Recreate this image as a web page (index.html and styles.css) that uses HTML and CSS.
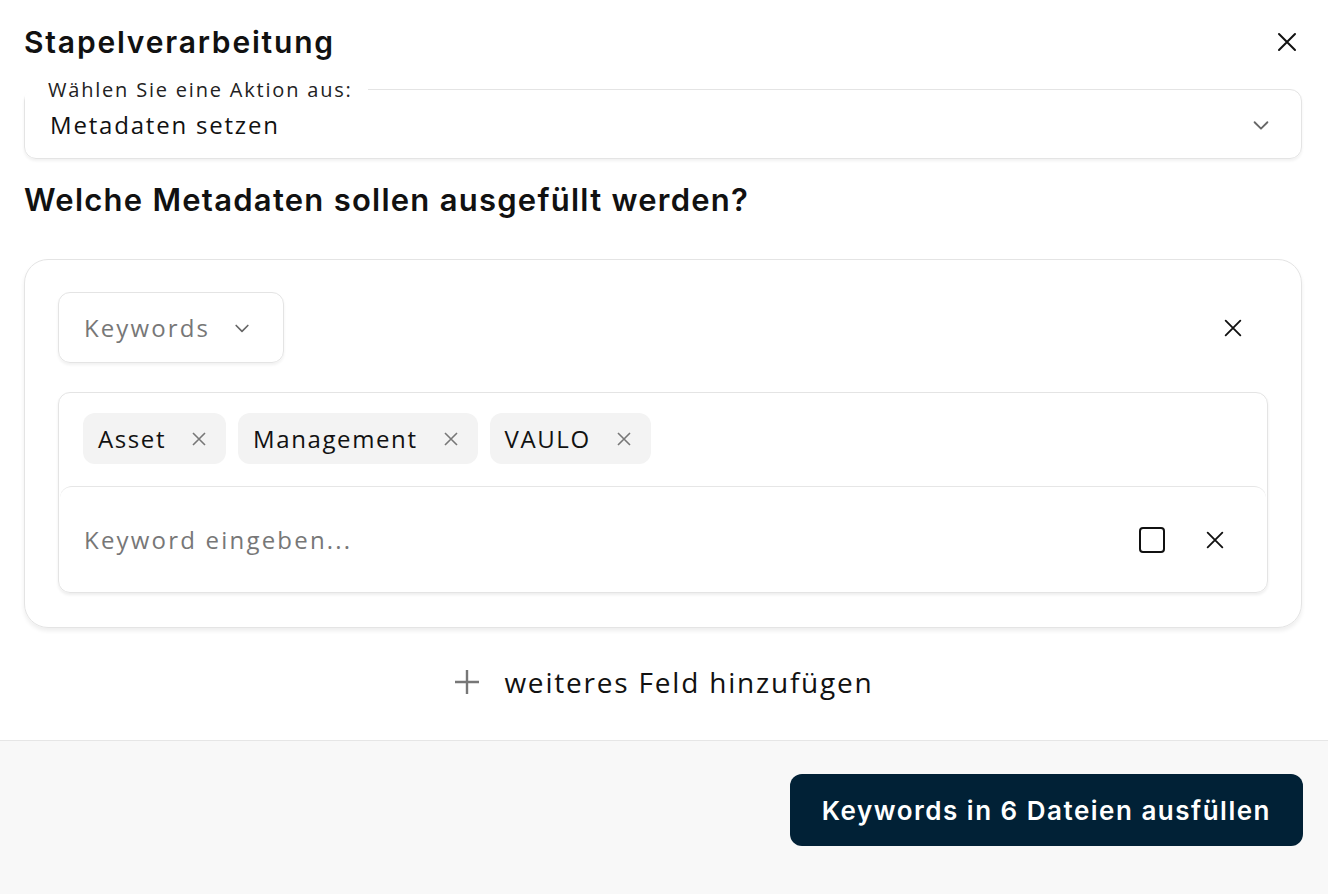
FILE: index.html
```html
<!DOCTYPE html>
<html>
<head>
    <link rel="stylesheet" href="styles.css">
</head>
<body>
    <div class="dialog">
        <div class="dialog-body">
            <div class="dialog-header">
                <h1 class="dialog-title">Stapelverarbeitung</h1>
                <button class="icon-btn close-btn" aria-label="Schließen">
                    <svg width="24" height="24" viewBox="0 0 24 24"><path d="M4 4L20 20M20 4L4 20" stroke="#111" stroke-width="2" stroke-linecap="round"/></svg>
                </button>
            </div>

            <fieldset class="action-select">
                <legend>Wählen Sie eine Aktion aus:</legend>
                <span class="action-value">Metadaten setzen</span>
                <svg class="chevron" width="22" height="22" viewBox="0 0 24 24"><path d="M5 9L12 16L19 9" fill="none" stroke="#666" stroke-width="2" stroke-linecap="round" stroke-linejoin="round"/></svg>
            </fieldset>

            <h2 class="section-title">Welche Metadaten sollen ausgefüllt werden?</h2>

            <div class="field-card">
                <div class="field-row">
                    <button class="field-select">
                        <span>Keywords</span>
                        <svg width="20" height="20" viewBox="0 0 24 24"><path d="M5 9L12 16L19 9" fill="none" stroke="#666" stroke-width="2" stroke-linecap="round" stroke-linejoin="round"/></svg>
                    </button>
                    <button class="icon-btn" aria-label="Feld entfernen">
                        <svg width="22" height="22" viewBox="0 0 24 24"><path d="M4 4L20 20M20 4L4 20" stroke="#111" stroke-width="2" stroke-linecap="round"/></svg>
                    </button>
                </div>

                <div class="keyword-box">
                    <div class="tags">
                        <span class="tag">Asset <svg width="16" height="16" viewBox="0 0 16 16"><path d="M2 2L14 14M14 2L2 14" stroke="#777" stroke-width="1.6"/></svg></span>
                        <span class="tag">Management <svg width="16" height="16" viewBox="0 0 16 16"><path d="M2 2L14 14M14 2L2 14" stroke="#777" stroke-width="1.6"/></svg></span>
                        <span class="tag">VAULO <svg width="16" height="16" viewBox="0 0 16 16"><path d="M2 2L14 14M14 2L2 14" stroke="#777" stroke-width="1.6"/></svg></span>
                    </div>
                    <div class="keyword-input">
                        <span class="placeholder">Keyword eingeben...</span>
                        <div class="input-actions">
                            <svg width="28" height="28" viewBox="0 0 28 28"><rect x="2" y="2" width="24" height="24" rx="3" fill="none" stroke="#111" stroke-width="2"/></svg>
                            <svg width="22" height="22" viewBox="0 0 24 24"><path d="M4 4L20 20M20 4L4 20" stroke="#111" stroke-width="2" stroke-linecap="round"/></svg>
                        </div>
                    </div>
                </div>
            </div>

            <button class="add-field">
                <svg width="30" height="30" viewBox="0 0 30 30"><path d="M15 3V27M3 15H27" stroke="#777" stroke-width="2.4"/></svg>
                <span>weiteres Feld hinzufügen</span>
            </button>
        </div>

        <div class="dialog-footer">
            <button class="primary-btn">Keywords in 6 Dateien ausfüllen</button>
        </div>
    </div>
</body>
</html>
```

FILE: styles.css
```css
* {
    box-sizing: border-box;
}

body {
    margin: 0;
    background: #fff;
    font-family: "Open Sans", sans-serif;
    letter-spacing: 1.6px;
    color: #111;
}

button {
    font: inherit;
    letter-spacing: inherit;
    color: inherit;
    background: none;
    border: none;
    padding: 0;
    cursor: pointer;
}

.dialog {
    display: flex;
    flex-direction: column;
    height: 894px;
}

.dialog-body {
    padding: 18px 26px 0 24px;
    flex: 1;
}

.dialog-header {
    display: flex;
    justify-content: space-between;
    align-items: center;
    height: 48px;
}

.dialog-title {
    margin: 0;
    font-family: "Inter", sans-serif;
    font-weight: 600;
    font-size: 30px;
    letter-spacing: 1.8px;
}

.close-btn {
    margin-right: 3px;
}

.icon-btn {
    display: flex;
    align-items: center;
    justify-content: center;
}

.action-select {
    margin: 10px 0 0;
    height: 83px;
    padding: 0 29px 0 25px;
    border: 1px solid #e4e4e4;
    border-radius: 12px;
    box-shadow: 0 2px 3px rgba(0, 0, 0, 0.06);
    display: flex;
    align-items: center;
    justify-content: space-between;
}

.action-select legend {
    padding: 0 15px 0 23px;
    margin-left: -25px;
    font-size: 20px;
    letter-spacing: 1.8px;
    color: #222;
}

.action-value {
    font-size: 24px;
    letter-spacing: 1.8px;
    margin-top: -12px;
}

.chevron {
    margin-top: -12px;
}

.section-title {
    margin: 22px 0 0;
    font-family: "Inter", sans-serif;
    font-weight: 600;
    font-size: 31px;
    letter-spacing: 1.25px;
}

.field-card {
    margin-top: 41px;
    border: 1px solid #e4e4e4;
    border-radius: 24px;
    box-shadow: 0 3px 4px rgba(0, 0, 0, 0.07);
    padding: 32px 33px 34px 33px;
}

.field-row {
    display: flex;
    justify-content: space-between;
    align-items: center;
    padding-right: 24px;
}

.field-select {
    display: flex;
    align-items: center;
    gap: 22px;
    height: 71px;
    padding: 0 31px 0 25px;
    border: 1px solid #e4e4e4;
    border-radius: 12px;
    box-shadow: 0 2px 3px rgba(0, 0, 0, 0.06);
    color: #777;
    font-size: 24px;
    letter-spacing: 2.1px;
}

.keyword-box {
    margin-top: 29px;
    border: 1px solid #e4e4e4;
    border-radius: 12px;
    box-shadow: 0 2px 3px rgba(0, 0, 0, 0.07);
}

.tags {
    display: flex;
    gap: 12px;
    padding: 20px 24px 22px;
}

.tag {
    display: flex;
    align-items: center;
    gap: 25px;
    height: 51px;
    padding: 0 19px 0 15px;
    background: #f3f3f3;
    border-radius: 12px;
    font-size: 24px;
}

.keyword-input {
    margin: 0 1px 0 1px;
    height: 106px;
    border-top: 1px solid #e6e6e6;
    border-radius: 12px;
    display: flex;
    align-items: center;
    justify-content: space-between;
    padding: 0 40px 0 24px;
}

.placeholder {
    font-size: 24px;
    letter-spacing: 2.2px;
    color: #777;
}

.input-actions {
    display: flex;
    align-items: center;
    gap: 38px;
}

.add-field {
    display: flex;
    align-items: center;
    gap: 22px;
    margin: 35px auto 0;
    font-size: 28px;
    letter-spacing: 1.8px;
    color: #111;
}

.dialog-footer {
    height: 154px;
    background: #f8f8f8;
    border-top: 1px solid #e6e6e6;
    display: flex;
    justify-content: flex-end;
    align-items: flex-start;
    padding: 33px 25px 0 0;
}

.primary-btn {
    height: 72px;
    padding: 0 32px;
    background: #012136;
    color: #fff;
    border-radius: 12px;
    font-family: "Inter", sans-serif;
    font-weight: 600;
    font-size: 26px;
    letter-spacing: 1.5px;
}
```
